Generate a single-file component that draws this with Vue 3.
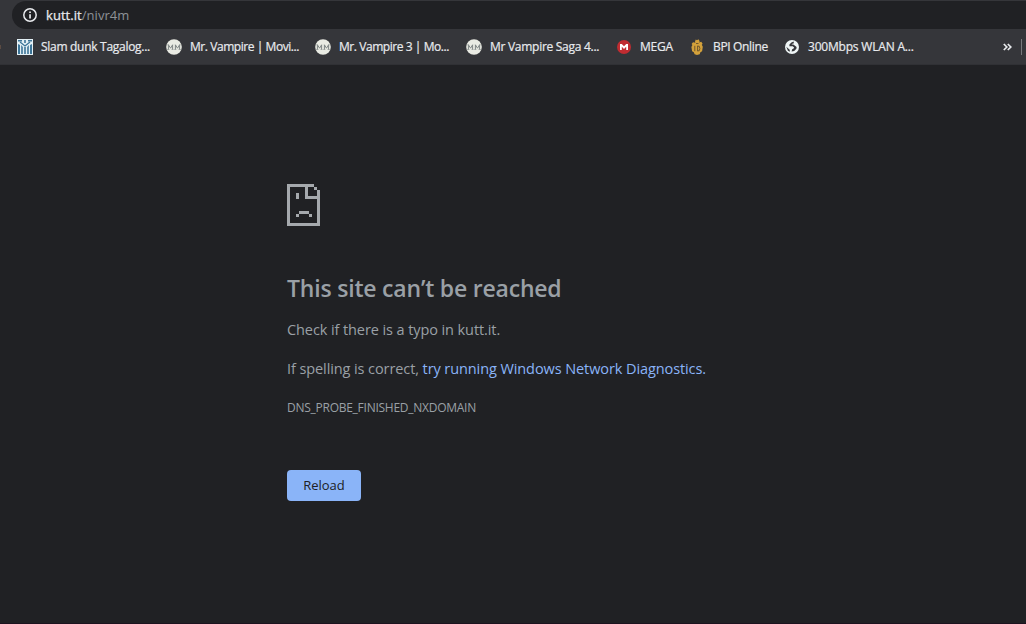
<script setup>
const bookmarks = [
  { label: 'Slam dunk Tagalog...', icon: 'court', cls: 'b0' },
  { label: 'Mr. Vampire | Movi...', icon: 'mm', cls: 'b1' },
  { label: 'Mr. Vampire 3 | Mo...', icon: 'mm', cls: 'b2' },
  { label: 'Mr Vampire Saga 4...', icon: 'mm', cls: 'b3' },
  { label: 'MEGA', icon: 'mega', cls: 'b4' },
  { label: 'BPI Online', icon: 'bpi', cls: 'b5' },
  { label: '300Mbps WLAN A...', icon: 'globe', cls: 'b6' },
]
</script>

<template>
  <div class="window">
    <header class="toolbar">
      <div class="omnibox">
        <svg class="info" viewBox="0 0 16 16">
          <circle cx="8" cy="8" r="6.2" fill="none" stroke="#e8eaed" stroke-width="1.5" />
          <path d="M7.2 4.4h1.7v1.7H7.2zM7.2 7.2h1.7v4.3H7.2z" fill="#e8eaed" />
        </svg>
        <span class="url"><b>kutt.it</b><i>/nivr4m</i></span>
      </div>
    </header>
    <nav class="bookmarks">
      <span class="edge"></span>
      <div v-for="b in bookmarks" :key="b.label" class="bookmark" :class="b.cls">
        <svg class="fav" viewBox="0 0 16 16">
          <g v-if="b.icon === 'court'">
            <path d="M0 0h16v16H0z" fill="#e3f0f5" />
            <path d="M1 1h4v1.5H1zM11 1h4v1.5h-4zM7.2 1h1.6v3H7.2zM1 5l2 1v9H1zM4.2 6l1.6 2v7H4.2zM7.2 8h1.6v7H7.2zM10.2 8l1.6-2v9h-1.6zM13 6l2-1v10h-2z" fill="#3c7598" />
            <path d="M3 3l5 4 5-4" fill="none" stroke="#3c7598" stroke-width="1.3" />
          </g>
          <g v-else-if="b.icon === 'mm'">
            <circle cx="8" cy="8" r="7.8" fill="#e9ebe3" />
            <path d="M2.4 10.5V5.8L4.6 9.2 6.6 5.8v4.7M9.4 10.5V5.8l2.1 3.4 2.1-3.4v4.7" fill="none" stroke="#7f8685" stroke-width="1" />
            <path d="M1.2 10.5h2.2M5.6 10.5h1.8M8.4 10.5h1.9M12.6 10.5h2.2M1.4 5.8h1.4M13.2 5.8h1.4" stroke="#969c9a" stroke-width=".9" />
          </g>
          <g v-else-if="b.icon === 'mega'">
            <circle cx="8" cy="8" r="7" fill="#c02c31" />
            <path d="M4 11V5h1.8L8 7.3 10.2 5H12v6h-1.8V7.8L8 9.9 5.8 7.8V11z" fill="#fff" />
          </g>
          <g v-else-if="b.icon === 'bpi'">
            <path d="M6 2.4L6.8.5l1.2.8L9.4.2l1.3 2-.6 1.4 2.2-.8 1.3 2-.8 1 1 2-.7 4.5-1.7 1-.7 2L8 16l-2.4-.8-.8-2-1.7-1L2.4 8l1-2-.8-1L4 3.2l2.3.5z" fill="#d3a13b" />
            <path d="M5.8 6.8v5.4M8.6 6.8v5.4M8.6 7.2h1.6q1.4 2.3 0 4.6H8.6M7 4.5h2.5" fill="none" stroke="#67502b" stroke-width=".9" />
          </g>
          <g v-else>
            <circle cx="8" cy="8" r="7" fill="#eef5f5" />
            <path d="M9.6 2.6L7.4 3.6 5.4 5.6v1.7h3.3l1.4 1.3-.5 1-1.4.6-.6 2.4 2.6-.6 2.2-2.3.2-1.7-1.9-1.4-1.4-1.2H7.8V4.9l2.1-.7zM2.3 7.8l3.4 2.9.2 2-2-1z" fill="#35363a" />
          </g>
        </svg>
        <span class="label">{{ b.label }}</span>
      </div>
      <svg class="more" viewBox="0 0 9 8"><path d="M.8 1l3 3-3 3M4.8 1l3 3-3 3" fill="none" stroke="#e8eaed" stroke-width="1.7" /></svg>
      <span class="divider"></span>
    </nav>
    <main class="error">
      <svg class="sad" viewBox="0 0 33 42" shape-rendering="crispEdges">
        <path fill="#a5a9ad" d="M0 0h27v3h-6v9h12v30H0zM3 3v36h27V15H18V3zM27 3h3v3h-3zM30 6h3v6h-3zM9 9h3v6H9zM12 27h10v3H12zM9 30h3v3H9zM22 30h3v3h-3z" />
      </svg>
      <h1>This site can’t be reached</h1>
      <p class="check">Check if there is a typo in kutt.it.</p>
      <p class="spell"><span>If spelling is correct, </span><a>try running Windows Network Diagnostics</a><em>.</em></p>
      <p class="code">DNS_PROBE_FINISHED_NXDOMAIN</p>
      <button>Reload</button>
    </main>
  </div>
</template>

<style>
body { margin: 0; background: #202124; }
</style>

<style scoped>
.window { box-sizing: border-box; width: 1026px; height: 624px; overflow: hidden; background: #202124; border-bottom: 1px solid #1c131f; font-family: "Open Sans", "Noto Sans", sans-serif; }
.toolbar { height: 29px; background: #35363a; box-sizing: border-box; padding: 1px 0 0 12px; }
.omnibox { height: 28px; border-radius: 14px 0 0 14px; background: #202124; display: flex; align-items: center; padding-left: 10px; }
.info { width: 16px; height: 16px; }
.url { margin-left: 8px; font-size: 13px; line-height: 18px; white-space: nowrap; letter-spacing: 0.05px; }
.url b { color: #e8eaed; font-weight: 400; -webkit-text-stroke: 0.25px #e8eaed; }
.url i { color: #8e9297; font-style: normal; }
.bookmarks { height: 36px; background: #35363a; border-bottom: 1px solid #303135; display: flex; align-items: center; box-sizing: border-box; }
.edge { width: 1px; height: 4px; background: #5b4b42; margin-right: 16px; }
.bookmark { display: flex; align-items: center; flex: none; width: 149px; letter-spacing: -0.2px; }
.fav { width: 16px; height: 16px; flex: none; }
.label { margin-left: 8px; font-size: 12px; line-height: 16px; color: #e8eaed; white-space: nowrap; -webkit-text-stroke: 0.2px #e8eaed; }
.b0 { letter-spacing: -0.29px; }
.b1 { letter-spacing: -0.44px; }
.b2 { width: 151px; letter-spacing: -0.44px; }
.b3 { width: 150px; letter-spacing: -0.28px; }
.b4 { width: 73px; }
.b5 { width: 95px; letter-spacing: -0.35px; }
.b6 { width: 150px; }
.more { width: 9px; height: 8px; margin-left: auto; }
.divider { width: 1px; height: 16px; background: #77797c; margin: 0 4px 0 9px; }
.error { padding: 119px 0 0 287px; color: #9aa0a6; }
.sad { display: block; width: 33px; height: 42px; }
h1 { margin: 46px 0 0; font-size: 23px; font-weight: 600; line-height: 32px; white-space: nowrap; letter-spacing: -0.2px; }
p { margin: 0; white-space: nowrap; }
.check, .spell { font-size: 14.5px; line-height: 20px; letter-spacing: -0.09px; }
.check { margin-top: 16px; }
.spell { margin-top: 19px; }
.spell span { white-space: pre; }
.spell a { color: #8ab4f8; }
.spell em { font-style: normal; color: #8ab4f8; }
.code { margin-top: 20px; font-size: 12px; line-height: 18px; letter-spacing: -0.26px; }
button { display: block; margin: 53px 0 0; width: 74px; height: 31px; padding: 0; border: 0; border-radius: 4px; background: #8ab4f8; color: #202124; font: 13px/31px "Open Sans", "Noto Sans", sans-serif; }
</style>
